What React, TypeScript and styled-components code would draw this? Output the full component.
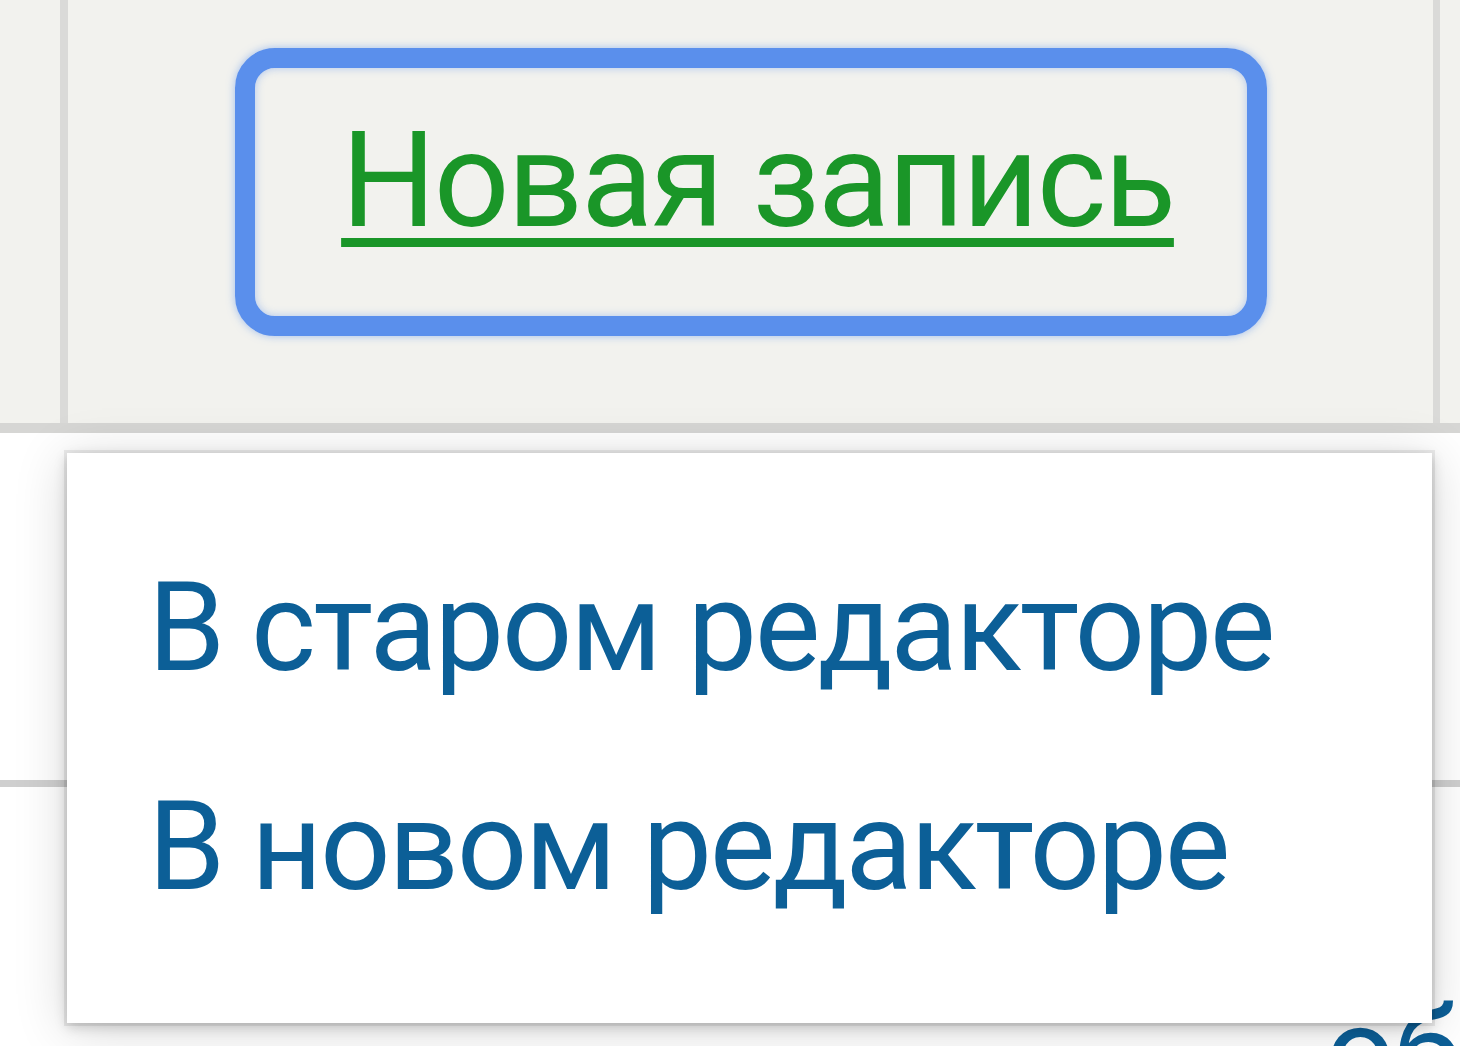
import React from "react";
import styled, { createGlobalStyle } from "styled-components";

const GlobalStyle = createGlobalStyle`
  html, body {
    margin: 0;
    padding: 0;
    background: #ffffff;
    overflow: hidden;
  }
  * { box-sizing: border-box; }
`;

const Page = styled.div`
  position: relative;
  width: 1460px;
  height: 1046px;
  overflow: hidden;
  background: #ffffff;
  font-family: Roboto, "Liberation Sans", Arial, sans-serif;
`;

const HeaderRow = styled.div`
  display: grid;
  grid-template-columns: 68px 1372px 1fr;
  height: 433px;
  background: #f2f2ee;
  border-bottom: 10px solid #d6d6d4;
`;

const HeaderCell = styled.div<{ $divider?: number }>`
  display: flex;
  justify-content: center;
  align-items: flex-start;
  border-right: ${(p) => (p.$divider ? `${p.$divider}px solid #dadad8` : "none")};
`;

const MainHeaderCell = styled(HeaderCell)`
  padding: 48px 0 0 0;
`;

const FocusRing = styled.div`
  display: flex;
  justify-content: center;
  width: 1032px;
  height: 288px;
  padding: 35px 0 0 14px;
  border: 20px solid #5a8fec;
  border-radius: 40px;
  box-shadow: 0 0 8px rgba(90, 143, 236, 0.55), inset 0 0 8px rgba(90, 143, 236, 0.45);
`;

const NewEntryLink = styled.a`
  font-size: 133px;
  line-height: 156px;
  letter-spacing: -2.3px;
  color: #1a9628;
  text-decoration: underline;
  text-decoration-thickness: 9px;
  text-underline-offset: 12px;
  white-space: nowrap;
  cursor: pointer;
`;

const BodyRow = styled.div<{ $height: number }>`
  display: grid;
  grid-template-columns: 1325px 1fr;
  height: ${(p) => p.$height}px;
  border-bottom: 7px solid #cfcfcf;
`;

const BodyCell = styled.div`
  padding-top: 193px;
  overflow: hidden;
`;

const RowLink = styled.a`
  font-size: 124px;
  line-height: 146px;
  letter-spacing: -2.5px;
  color: #0c5f97;
  white-space: nowrap;
  text-decoration: none;
`;

const Menu = styled.div`
  position: absolute;
  left: 67px;
  top: 453px;
  width: 1365px;
  height: 570px;
  padding: 65px 0 67px;
  background: #ffffff;
  box-shadow:
    0 0 0 3px rgba(0, 0, 0, 0.07),
    0 4px 12px rgba(0, 0, 0, 0.18),
    0 6px 50px rgba(0, 0, 0, 0.16);
  display: flex;
  flex-direction: column;
`;

const MenuItem = styled.a`
  display: block;
  padding: 37px 0 37px 81px;
  font-size: 124px;
  line-height: 145px;
  letter-spacing: -2.5px;
  color: #0c5f97;
  white-space: nowrap;
  text-decoration: none;
  cursor: pointer;
`;

export default function App() {
  return (
    <Page>
      <GlobalStyle />
      <HeaderRow>
        <HeaderCell $divider={8} />
        <MainHeaderCell $divider={7}>
          <FocusRing>
            <NewEntryLink>Новая запись</NewEntryLink>
          </FocusRing>
        </MainHeaderCell>
        <HeaderCell />
      </HeaderRow>
      <BodyRow $height={354}>
        <BodyCell />
        <BodyCell />
      </BodyRow>
      <BodyRow $height={600}>
        <BodyCell />
        <BodyCell>
          <RowLink>обновить</RowLink>
        </BodyCell>
      </BodyRow>
      <Menu>
        <MenuItem>В старом редакторе</MenuItem>
        <MenuItem>В новом редакторе</MenuItem>
      </Menu>
    </Page>
  );
}
